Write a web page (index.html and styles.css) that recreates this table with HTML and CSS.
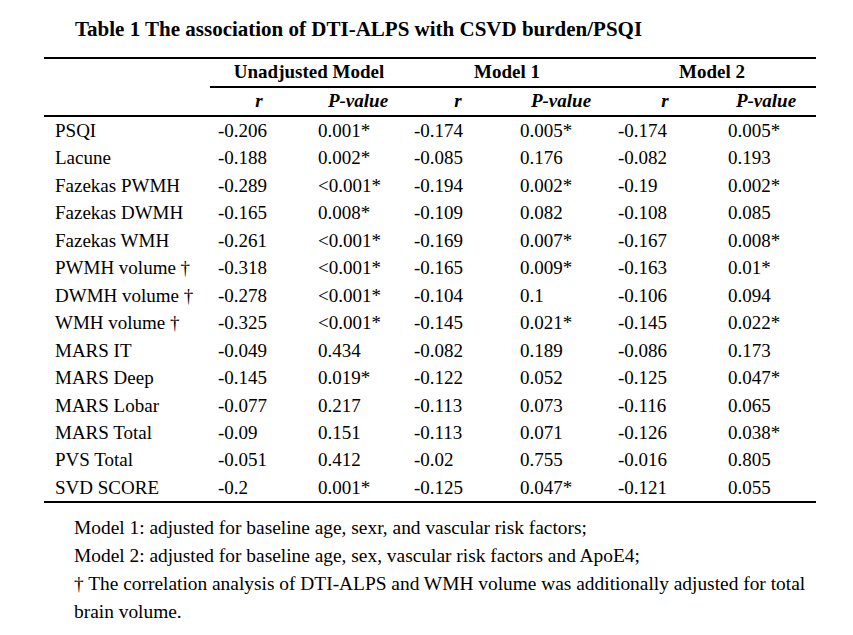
FILE: index.html
```html
<!DOCTYPE html>
<html>
<head>
<meta charset="utf-8">
<link rel="stylesheet" href="styles.css">
</head>
<body>
<div class="page">
  <h1 class="title">Table 1 The association of DTI-ALPS with CSVD burden/PSQI</h1>
  <table class="tbl">
    <colgroup>
      <col class="c-label"><col class="c-r1"><col class="c-p1"><col class="c-r2"><col class="c-p2"><col class="c-r3"><col class="c-p3">
    </colgroup>
    <thead>
      <tr class="grp">
        <th class="blank"></th>
        <th colspan="2" class="g g1">Unadjusted Model</th>
        <th colspan="2" class="g g2">Model 1</th>
        <th colspan="2" class="g g3">Model 2</th>
      </tr>
      <tr class="sub">
        <th></th>
        <th>r</th><th>P-value</th>
        <th>r</th><th>P-value</th>
        <th>r</th><th>P-value</th>
      </tr>
    </thead>
    <tbody>
      <tr><td>PSQI</td><td>-0.206</td><td>0.001*</td><td>-0.174</td><td>0.005*</td><td>-0.174</td><td>0.005*</td></tr>
      <tr><td>Lacune</td><td>-0.188</td><td>0.002*</td><td>-0.085</td><td>0.176</td><td>-0.082</td><td>0.193</td></tr>
      <tr><td>Fazekas PWMH</td><td>-0.289</td><td>&lt;0.001*</td><td>-0.194</td><td>0.002*</td><td>-0.19</td><td>0.002*</td></tr>
      <tr><td>Fazekas DWMH</td><td>-0.165</td><td>0.008*</td><td>-0.109</td><td>0.082</td><td>-0.108</td><td>0.085</td></tr>
      <tr><td>Fazekas WMH</td><td>-0.261</td><td>&lt;0.001*</td><td>-0.169</td><td>0.007*</td><td>-0.167</td><td>0.008*</td></tr>
      <tr><td>PWMH volume †</td><td>-0.318</td><td>&lt;0.001*</td><td>-0.165</td><td>0.009*</td><td>-0.163</td><td>0.01*</td></tr>
      <tr><td>DWMH volume †</td><td>-0.278</td><td>&lt;0.001*</td><td>-0.104</td><td>0.1</td><td>-0.106</td><td>0.094</td></tr>
      <tr><td>WMH volume †</td><td>-0.325</td><td>&lt;0.001*</td><td>-0.145</td><td>0.021*</td><td>-0.145</td><td>0.022*</td></tr>
      <tr><td>MARS IT</td><td>-0.049</td><td>0.434</td><td>-0.082</td><td>0.189</td><td>-0.086</td><td>0.173</td></tr>
      <tr><td>MARS Deep</td><td>-0.145</td><td>0.019*</td><td>-0.122</td><td>0.052</td><td>-0.125</td><td>0.047*</td></tr>
      <tr><td>MARS Lobar</td><td>-0.077</td><td>0.217</td><td>-0.113</td><td>0.073</td><td>-0.116</td><td>0.065</td></tr>
      <tr><td>MARS Total</td><td>-0.09</td><td>0.151</td><td>-0.113</td><td>0.071</td><td>-0.126</td><td>0.038*</td></tr>
      <tr><td>PVS Total</td><td>-0.051</td><td>0.412</td><td>-0.02</td><td>0.755</td><td>-0.016</td><td>0.805</td></tr>
      <tr><td>SVD SCORE</td><td>-0.2</td><td>0.001*</td><td>-0.125</td><td>0.047*</td><td>-0.121</td><td>0.055</td></tr>
    </tbody>
  </table>
  <div class="notes">
    <p>Model 1: adjusted for baseline age, sexr, and vascular risk factors;</p>
    <p>Model 2: adjusted for baseline age, sex, vascular risk factors and ApoE4;</p>
    <p>† The correlation analysis of DTI-ALPS and WMH volume was additionally adjusted for total brain volume.</p>
  </div>
</div>
</body>
</html>
```

FILE: styles.css
```css
html, body {
  margin: 0;
  padding: 0;
  background: #ffffff;
}

.page {
  font-family: "Liberation Serif", "Times New Roman", serif;
  color: #000;
  padding: 17px 0 0 44px;
}

.title {
  margin: 0 0 16px 31px;
  font-size: 21px;
  line-height: 24px;
  font-weight: bold;
}

.tbl {
  border-collapse: collapse;
  table-layout: fixed;
  width: 772px;
  font-size: 19px;
  border-top: 2px solid #000;
  border-bottom: 2px solid #000;
}

.c-label { width: 166px; }
.c-r1 { width: 98px; }
.c-p1 { width: 100px; }
.c-r2 { width: 100px; }
.c-p2 { width: 106px; }
.c-r3 { width: 102px; }
.c-p3 { width: 100px; }

.tbl th, .tbl td {
  padding: 0;
  white-space: nowrap;
}

.grp th {
  height: 27px;
  line-height: 26px;
  vertical-align: top;
  padding-top: 0;
  font-weight: bold;
  text-align: center;
}

.grp .g {
  border-bottom: 2px solid #000;
}

.grp .g2 { padding-right: 8px; }
.grp .g3 { padding-right: 6px; }

.sub th {
  height: 27px;
  line-height: 26px;
  vertical-align: top;
  font-weight: bold;
  font-style: italic;
  text-align: center;
  border-bottom: 2px solid #000;
}

.tbl tbody td {
  height: 27.45px;
  line-height: 27.45px;
  text-align: left;
}

.tbl tbody td:nth-child(1) { padding-left: 11px; }
.tbl tbody td:nth-child(2) { padding-left: 8px; }
.tbl tbody td:nth-child(3) { padding-left: 10px; }
.tbl tbody td:nth-child(4) { padding-left: 6px; }
.tbl tbody td:nth-child(5) { padding-left: 12px; }
.tbl tbody td:nth-child(6) { padding-left: 4px; }
.tbl tbody td:nth-child(7) { padding-left: 12px; }

.notes {
  margin: 11px 0 0 30px;
  width: 745px;
  font-size: 19.4px;
  line-height: 28px;
}

.notes p {
  margin: 0;
}
```
